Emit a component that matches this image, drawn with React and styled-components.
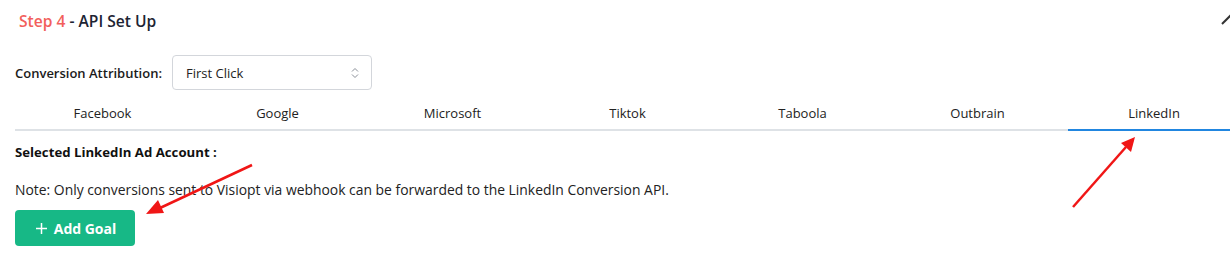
import React from "react";
import styled, { createGlobalStyle } from "styled-components";

const Global = createGlobalStyle`
  html, body { margin: 0; padding: 0; background: #fff; overflow: hidden; }
  body { font-family: "Open Sans", "Noto Sans", sans-serif; color: #212529; }
  * { box-sizing: border-box; }
`;

const Card = styled.div`
  position: relative;
  width: 1245px;
  padding: 0 0 12px 15px;
`;

const Header = styled.div`
  display: flex;
  align-items: center;
  justify-content: space-between;
  height: 42px;
  padding: 0 4px 0 4px;
`;

const Title = styled.h3`
  margin: 0;
  font-size: 15.6px;
  font-weight: 600;
  color: #1d2433;
`;

const Step = styled.span`
  color: #f25f5c;
`;

const AttrRow = styled.div`
  display: flex;
  align-items: center;
  gap: 10px;
  margin-top: 13px;
`;

const Label = styled.label`
  font-size: 13px;
  font-weight: 600;
  color: #1b1b1b;
`;

const Select = styled.div`
  width: 200px;
  height: 35px;
  border: 1px solid #d3d6db;
  border-radius: 4px;
  display: flex;
  align-items: center;
  justify-content: space-between;
  padding: 0 12px 0 13px;
  font-size: 13px;
  color: #222;
`;

const Tabs = styled.div`
  display: grid;
  grid-template-columns: repeat(7, 175px);
  margin-top: 7px;
  border-bottom: 2px solid #dee2e6;
`;

const Tab = styled.div`
  height: 34px;
  display: flex;
  align-items: center;
  justify-content: center;
  font-size: 13px;
  color: #222;
  margin-bottom: -2px;
  border-bottom: 2px solid ${(p) => (p.$active ? "#2186e0" : "transparent")};
  margin-left: ${(p) => (p.$active ? "3px" : "0")};
`;

const Heading = styled.div`
  font-size: 13.2px;
  font-weight: 700;
  color: #111;
  margin-top: 12px;
`;

const Note = styled.p`
  font-size: 13.9px;
  margin: 19px 0 0;
  color: #222;
  line-height: 19px;
`;

const Button = styled.button`
  margin-top: 11px;
  width: 120px;
  height: 36px;
  border: none;
  border-radius: 4px;
  background: #17b886;
  color: #fff;
  font-family: inherit;
  font-size: 14px;
  font-weight: 700;
  display: flex;
  align-items: center;
  justify-content: center;
  gap: 7px;
  padding: 0 0 0 2px;
`;

const Overlay = styled.svg`
  position: absolute;
  left: 0;
  top: 0;
  width: 1230px;
  height: 258px;
  pointer-events: none;
`;

const tabs = ["Facebook", "Google", "Microsoft", "Tiktok", "Taboola", "Outbrain", "LinkedIn"];

export default function App() {
  return (
    <>
      <Global />
      <Card>
        <Header>
          <Title>
            <Step>Step 4</Step> - API Set Up
          </Title>
        </Header>
        <AttrRow>
          <Label>Conversion Attribution:</Label>
          <Select>
            <span>First Click</span>
            <svg width="8" height="12" viewBox="0 0 8 12" fill="none" stroke="#8a8f98" strokeWidth="1">
              <path d="M1 4.5L4 1.5L7 4.5" />
              <path d="M1 7.5L4 10.5L7 7.5" />
            </svg>
          </Select>
        </AttrRow>
        <Tabs>
          {tabs.map((t) => (
            <Tab key={t} $active={t === "LinkedIn"}>
              {t}
            </Tab>
          ))}
        </Tabs>
        <Heading>Selected LinkedIn Ad Account :</Heading>
        <Note>Note: Only conversions sent to Visiopt via webhook can be forwarded to the LinkedIn Conversion API.</Note>
        <Button>
          <svg width="11" height="11" viewBox="0 0 11 11" stroke="#fff" strokeWidth="1.5">
            <path d="M5.5 0V11M0 5.5H11" />
          </svg>
          Add Goal
        </Button>
        <Overlay viewBox="0 0 1230 258">
          <path d="M1222 24L1232 14" stroke="#333" strokeWidth="2" fill="none" />
          <line x1="252" y1="165" x2="160" y2="208" stroke="#f01616" strokeWidth="2.5" />
          <polygon points="146,214 158,200 164,213" fill="#f01616" />
          <line x1="1073" y1="207" x2="1126" y2="147" stroke="#f01616" strokeWidth="2.5" />
          <polygon points="1135,137 1121,143 1131,152" fill="#f01616" />
        </Overlay>
      </Card>
    </>
  );
}
